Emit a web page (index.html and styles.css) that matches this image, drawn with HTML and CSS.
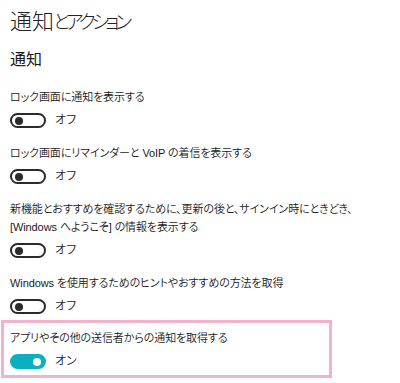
FILE: index.html
```html
<!DOCTYPE html>
<html lang="ja">
<head>
<meta charset="utf-8">
<link rel="stylesheet" href="styles.css">
</head>
<body>
<div class="page">
  <h1 class="title">通知<span class="title-kana">とアクション</span></h1>
  <h2 class="section">通知</h2>
  <div class="setting">
    <div class="label">ロック画面に通知を表示する</div>
    <div class="switch-row"><span class="switch"><span class="knob"></span></span><span class="state">オフ</span></div>
  </div>
  <div class="setting">
    <div class="label">ロック画面にリマインダーと VoIP の着信を表示する</div>
    <div class="switch-row"><span class="switch"><span class="knob"></span></span><span class="state">オフ</span></div>
  </div>
  <div class="setting">
    <div class="label">新機能とおすすめを確認するために、更新の後と、サインイン時にときどき、<br>[Windows へようこそ] の情報を表示する</div>
    <div class="switch-row"><span class="switch"><span class="knob"></span></span><span class="state">オフ</span></div>
  </div>
  <div class="setting">
    <div class="label">Windows を使用するためのヒントやおすすめの方法を取得</div>
    <div class="switch-row"><span class="switch"><span class="knob"></span></span><span class="state">オフ</span></div>
  </div>
  <div class="setting highlight">
    <div class="label">アプリやその他の送信者からの通知を取得する</div>
    <div class="switch-row"><span class="switch on"><span class="knob"></span></span><span class="state">オン</span></div>
  </div>
</div>
</body>
</html>
```
FILE: styles.css
```css
html, body {
  margin: 0;
  padding: 0;
  background: #ffffff;
}
.page {
  padding: 7px 0 0 10px;
  font-family: "Liberation Sans", "Noto Sans CJK JP", sans-serif;
  color: #1a1a1a;
  font-feature-settings: "palt";
}
.title {
  margin: 0 0 11px;
  font-size: 22px;
  line-height: 30px;
  font-weight: 300;
  color: #222222;
}
.title-kana {
  margin-left: -1px;
  font-size: 19px;
  letter-spacing: -4px;
}
.section {
  margin: 0 0 9px;
  font-size: 16px;
  line-height: 22px;
  font-weight: 400;
  color: #1a1a1a;
}
.setting {
  padding: 8px 0;
}
.label {
  font-size: 11px;
  line-height: 18px;
  font-weight: 350;
  letter-spacing: -0.1px;
}
.switch-row {
  margin-top: 7px;
  height: 15px;
  display: flex;
  align-items: center;
}
.switch {
  box-sizing: border-box;
  width: 36px;
  height: 15px;
  border: 2px solid #2b2b2b;
  border-radius: 8px;
  display: flex;
  align-items: center;
  padding-left: 3px;
}
.knob {
  width: 8px;
  height: 8px;
  border-radius: 50%;
  background: #2b2b2b;
}
.switch.on {
  background: #0ab0bf;
  border-color: #0ab0bf;
  justify-content: flex-end;
  padding-left: 0;
  padding-right: 3px;
}
.switch.on .knob {
  background: #ffffff;
}
.state {
  margin-left: 9px;
  font-size: 12px;
  line-height: 15px;
  font-weight: 350;
}
.highlight {
  box-sizing: border-box;
  width: 331px;
  margin: -2px 0 0 -9px;
  padding: 6px 0 6px 6px;
  border: 3px solid #f3b2cb;
}
```
